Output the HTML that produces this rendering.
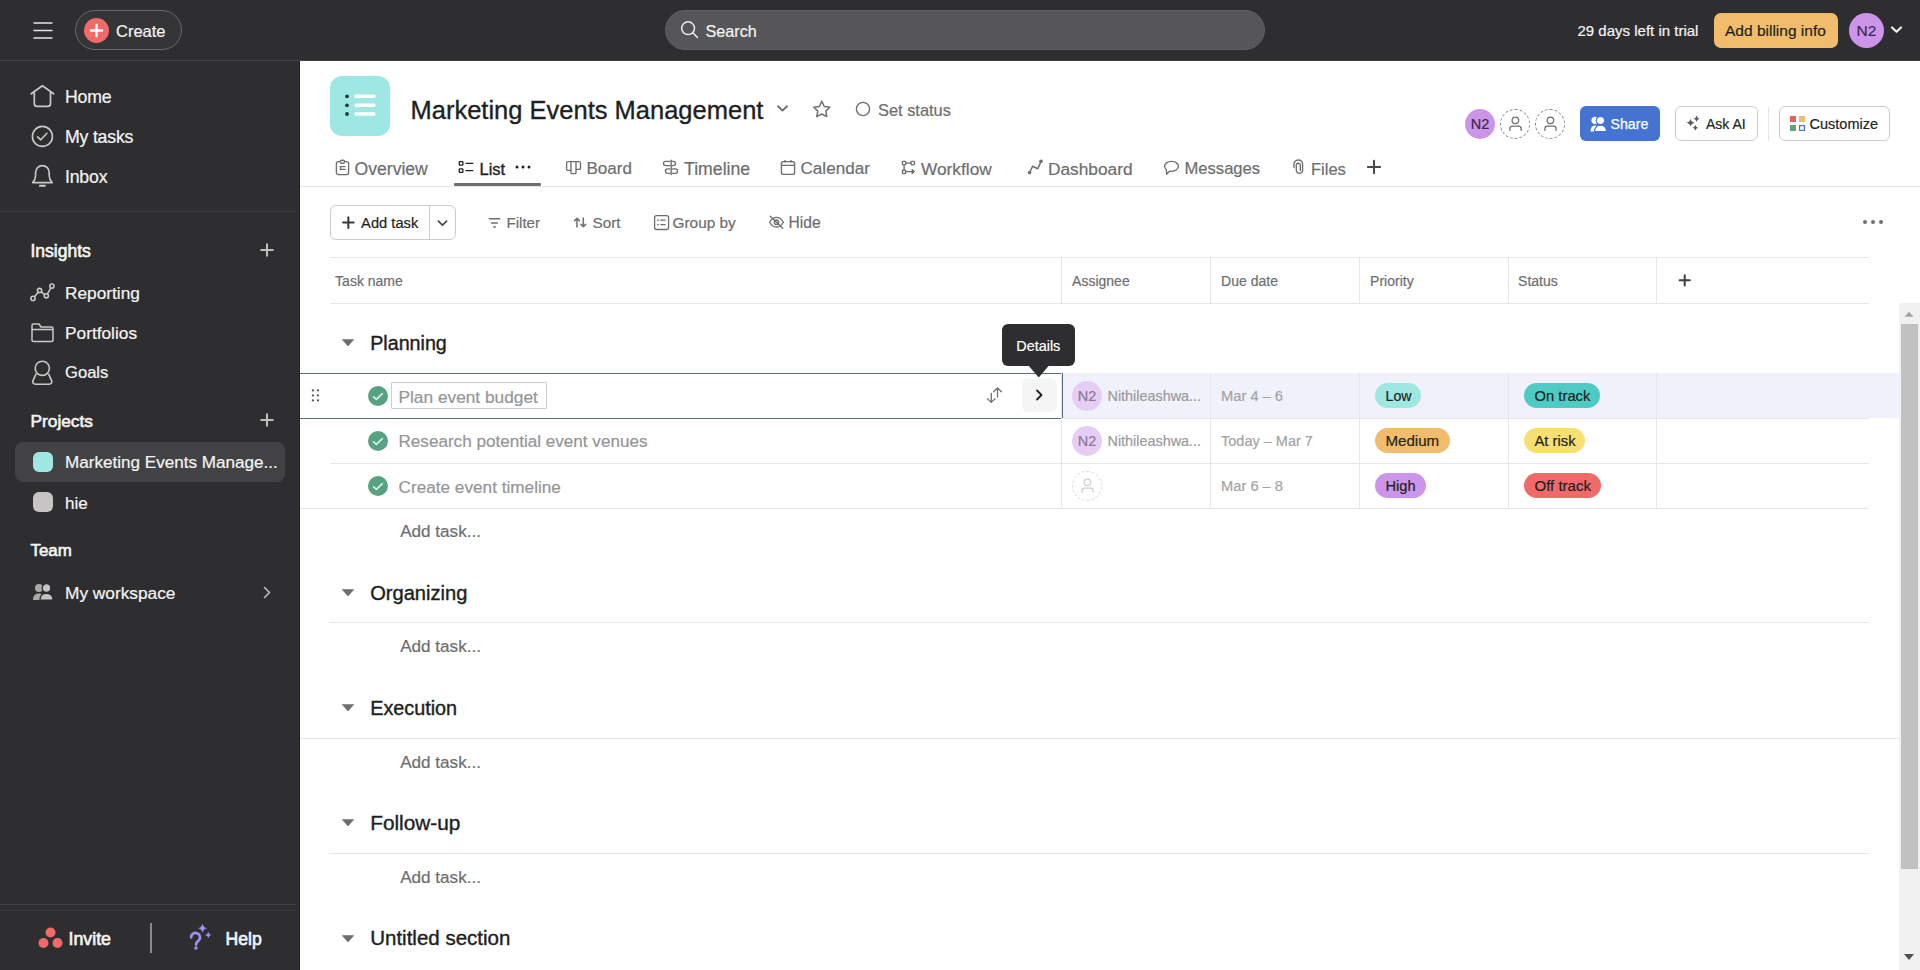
<!DOCTYPE html>
<html><head><meta charset="utf-8"><style>
html,body{margin:0;padding:0;width:1920px;height:970px;overflow:hidden;background:#fff;font-family:"Liberation Sans",sans-serif}
.a{position:absolute}
.t{position:absolute;white-space:nowrap;line-height:20px;-webkit-text-stroke-width:0.2px}
</style></head><body>
<div class="a" style="left:0px;top:0px;width:1920px;height:60px;background:#2e2e30"></div>
<div class="a" style="left:0px;top:60px;width:1920px;height:1px;background:#424244"></div>
<svg class="a" style="left:33px;top:22px;" width="20" height="17" viewBox="0 0 20 17"><path d="M1 0.9H19M1 8.5H19M1 16.1H19" stroke="#e6e6e6" stroke-width="1.5" stroke-linecap="round"/></svg>
<div class="a" style="left:75px;top:10px;width:107px;height:40px;box-sizing:border-box;border:1px solid #6a6a6c;border-radius:20px;background:#353537"></div>
<svg class="a" style="left:84px;top:18px;" width="25" height="25" viewBox="0 0 25 25"><circle cx="12.5" cy="12.5" r="12.5" fill="#f06a6a"/><path d="M12.5 7V18M7 12.5H18" stroke="#fff" stroke-width="2.4" stroke-linecap="round"/></svg>
<div class="t" style="left:116.0px;top:20.9px;font-size:16.5px;color:#f5f4f3;font-weight:400;">Create</div>
<div class="a" style="left:665px;top:10px;width:600px;height:40px;box-sizing:border-box;border-radius:20px;background:#565557;border:1px solid #5f5f61"></div>
<svg class="a" style="left:680px;top:20px;" width="20" height="20" viewBox="0 0 20 20"><circle cx="8.1" cy="8.2" r="6.4" fill="none" stroke="#ececec" stroke-width="1.5"/><path d="M12.7 12.8L17.4 17.4" stroke="#ececec" stroke-width="1.5" stroke-linecap="round"/></svg>
<div class="t" style="left:705.5px;top:20.9px;font-size:16.2px;color:#f5f4f3;font-weight:400;">Search</div>
<div class="t" style="left:1577.5px;top:20.6px;font-size:15px;color:#f5f4f3;font-weight:400;">29 days left in trial</div>
<div class="a" style="left:1714px;top:13px;width:124px;height:35px;border-radius:7px;background:#f1bd6c"></div>
<div class="t" style="left:1725.0px;top:21.1px;font-size:15.5px;color:#1e1f21;font-weight:400;">Add billing info</div>
<div class="a" style="left:1849px;top:13px;width:35px;height:35px;border-radius:50%;background:#cd95ea"></div>
<div class="t" style="left:1849.0px;top:20.9px;font-size:15.5px;color:#3b2850;font-weight:400;width:35px;text-align:center">N2</div>
<svg class="a" style="left:1890px;top:25px;" width="13" height="10" viewBox="0 0 13 10"><path d="M2 2.5L6.5 6.8L11 2.5" fill="none" stroke="#f0f0f0" stroke-width="2.2" stroke-linecap="round" stroke-linejoin="round"/></svg>
<div class="a" style="left:0px;top:61px;width:300px;height:909px;background:#2e2e30"></div>
<div class="a" style="left:0px;top:211px;width:296px;height:1px;background:#3f3f41"></div>
<div class="a" style="left:0px;top:904px;width:296px;height:1px;background:#424244"></div>
<div class="a" style="left:0px;top:910px;width:296px;height:1px;background:#363638"></div>
<div class="a" style="left:299px;top:61px;width:1px;height:909px;background:#1f1f21"></div>
<svg class="a" style="left:30px;top:84px;" width="25" height="25" viewBox="0 0 25 25"><path d="M1.2 9.8L12.4 1.8L23.6 9.8M4.3 7.8V19.4A3 3 0 0 0 7.3 22.4H17.5A3 3 0 0 0 20.5 19.4V7.8" fill="none" stroke="#c9c9c9" stroke-width="1.7" stroke-linecap="round" stroke-linejoin="round"/></svg>
<div class="t" style="left:65.0px;top:87.0px;font-size:17.7px;color:#f5f4f3;font-weight:400;letter-spacing:-0.2px">Home</div>
<svg class="a" style="left:31px;top:125px;" width="23" height="23" viewBox="0 0 23 23"><circle cx="11.4" cy="11.4" r="10" fill="none" stroke="#c9c9c9" stroke-width="1.6"/><path d="M6.6 11.8L9.8 14.8L15.9 8.3" fill="none" stroke="#c9c9c9" stroke-width="1.6" stroke-linecap="round" stroke-linejoin="round"/></svg>
<div class="t" style="left:65.0px;top:126.9px;font-size:17.7px;color:#f5f4f3;font-weight:400;letter-spacing:-0.2px">My tasks</div>
<svg class="a" style="left:31px;top:163px;" width="23" height="25" viewBox="0 0 23 25"><path d="M1.6 19.6C3.6 17.6 4.6 15.6 4.6 12.8V9.4A6.8 6.8 0 0 1 18.2 9.4V12.8C18.2 15.6 19.2 17.6 21.2 19.6Z" fill="none" stroke="#c9c9c9" stroke-width="1.6" stroke-linejoin="round"/><path d="M8.9 22.8H13.9" stroke="#c9c9c9" stroke-width="2" stroke-linecap="round"/></svg>
<div class="t" style="left:65.0px;top:167.0px;font-size:17.7px;color:#f5f4f3;font-weight:400;letter-spacing:-0.2px">Inbox</div>
<div class="t" style="left:30.5px;top:240.5px;font-size:17.5px;color:#f5f4f3;font-weight:400;-webkit-text-stroke:0.6px #f5f4f3">Insights</div>
<svg class="a" style="left:260px;top:243px;" width="14" height="14" viewBox="0 0 14 14"><path d="M7 1.2V12.8M1.2 7H12.8" stroke="#bdbdbd" stroke-width="2.1" stroke-linecap="round"/></svg>
<svg class="a" style="left:30px;top:282px;" width="25" height="20" viewBox="0 0 25 20"><path d="M3 16.4L9.6 8.5L16.3 13.8L21.9 4.1" fill="none" stroke="#c9c9c9" stroke-width="1.6"/><circle cx="3" cy="16.4" r="2.1" fill="#2e2e30" stroke="#c9c9c9" stroke-width="1.6"/><circle cx="9.6" cy="8.5" r="2.1" fill="#2e2e30" stroke="#c9c9c9" stroke-width="1.6"/><circle cx="16.3" cy="13.8" r="2.1" fill="#2e2e30" stroke="#c9c9c9" stroke-width="1.6"/><circle cx="21.9" cy="4.1" r="2.1" fill="#2e2e30" stroke="#c9c9c9" stroke-width="1.6"/></svg>
<div class="t" style="left:65.0px;top:282.5px;font-size:17.3px;color:#f5f4f3;font-weight:400;">Reporting</div>
<svg class="a" style="left:30px;top:322px;" width="25" height="21" viewBox="0 0 25 21"><path d="M2 3.5A1.5 1.5 0 0 1 3.5 2H9L11 5H21.5A1.5 1.5 0 0 1 23 6.5V18A1.5 1.5 0 0 1 21.5 19.5H3.5A1.5 1.5 0 0 1 2 18Z M2 7.5H23" fill="none" stroke="#c9c9c9" stroke-width="1.5" stroke-linejoin="round"/></svg>
<div class="t" style="left:65.0px;top:322.5px;font-size:17.3px;color:#f5f4f3;font-weight:400;">Portfolios</div>
<svg class="a" style="left:31px;top:359px;" width="23" height="27" viewBox="0 0 23 27"><circle cx="11.3" cy="9.3" r="7.1" fill="none" stroke="#c9c9c9" stroke-width="1.6"/><path d="M5.2 14.6L1.9 21.8Q1.2 25.2 4.6 25.2H18Q21.4 25.2 20.7 21.8L17.4 14.6" fill="none" stroke="#c9c9c9" stroke-width="1.6" stroke-linejoin="round"/></svg>
<div class="t" style="left:65.0px;top:362.7px;font-size:16.6px;color:#f5f4f3;font-weight:400;">Goals</div>
<div class="t" style="left:30.5px;top:410.8px;font-size:17.3px;color:#f5f4f3;font-weight:400;-webkit-text-stroke:0.6px #f5f4f3">Projects</div>
<svg class="a" style="left:260px;top:413px;" width="14" height="14" viewBox="0 0 14 14"><path d="M7 1.2V12.8M1.2 7H12.8" stroke="#bdbdbd" stroke-width="2.1" stroke-linecap="round"/></svg>
<div class="a" style="left:15px;top:442px;width:270px;height:40px;border-radius:8px;background:#424244"></div>
<div class="a" style="left:33px;top:452px;width:20px;height:20px;border-radius:6px;background:#9ee7e3"></div>
<div class="t" style="left:65.0px;top:453.1px;font-size:17.1px;color:#f5f4f3;font-weight:400;">Marketing Events Manage...</div>
<div class="a" style="left:33px;top:492px;width:20px;height:20px;border-radius:6px;background:#c7c4c4"></div>
<div class="t" style="left:65.0px;top:493.6px;font-size:17.1px;color:#f5f4f3;font-weight:400;">hie</div>
<div class="t" style="left:30.5px;top:540.6px;font-size:16.9px;color:#f5f4f3;font-weight:400;-webkit-text-stroke:0.6px #f5f4f3">Team</div>
<svg class="a" style="left:32px;top:583px;" width="22" height="18" viewBox="0 0 22 18"><circle cx="7" cy="5" r="4" fill="#a9a9a9"/><circle cx="14.5" cy="5" r="4.3" fill="#c4c4c4" stroke="#2e2e30" stroke-width="1.2"/><path d="M1 17C1 12.5 3.5 10.5 7 10.5S13 12.5 13 17Z" fill="#a9a9a9"/><path d="M8 17C8 12.5 10.5 10.3 14.5 10.3S21 12.5 21 17Z" fill="#c4c4c4" stroke="#2e2e30" stroke-width="1.2"/></svg>
<div class="t" style="left:65.0px;top:583.0px;font-size:17.3px;color:#f5f4f3;font-weight:400;">My workspace</div>
<svg class="a" style="left:263px;top:586px;" width="8" height="13" viewBox="0 0 8 13"><path d="M1.5 1.5L6.5 6.5L1.5 11.5" fill="none" stroke="#bdbdbd" stroke-width="1.6" stroke-linecap="round" stroke-linejoin="round"/></svg>
<svg class="a" style="left:38px;top:927px;" width="25" height="22" viewBox="0 0 25 22"><circle cx="12.5" cy="5.5" r="5" fill="#f06a6a"/><circle cx="5.5" cy="16" r="5" fill="#f06a6a"/><circle cx="19.5" cy="16" r="5" fill="#f06a6a"/></svg>
<div class="t" style="left:68.5px;top:928.5px;font-size:17.8px;color:#f5f4f3;font-weight:400;-webkit-text-stroke:0.65px #f5f4f3">Invite</div>
<div class="a" style="left:150px;top:923px;width:2px;height:30px;background:#8a8a8a"></div>
<svg class="a" style="left:188px;top:922px;" width="25" height="30" viewBox="0 0 25 30"><path d="M3.2 15.4A4.4 4.4 0 1 1 10.9 18.2C9.3 19.4 8.1 20.2 8.1 22.6" fill="none" stroke="#9d90ee" stroke-width="2.7" stroke-linecap="round"/><circle cx="7.9" cy="26" r="1.8" fill="#9d90ee"/><path d="M14.5 1.6Q15.2 5.6 19.2 6.3Q15.2 7 14.5 11Q13.8 7 9.8 6.3Q13.8 5.6 14.5 1.6Z" fill="#9d90ee"/><path d="M20.3 9.8Q20.8 12.5 23.5 13Q20.8 13.5 20.3 16.2Q19.8 13.5 17.1 13Q19.8 12.5 20.3 9.8Z" fill="#9d90ee"/></svg>
<div class="t" style="left:225.5px;top:928.9px;font-size:17.6px;color:#f5f4f3;font-weight:400;-webkit-text-stroke:0.65px #f5f4f3">Help</div>
<div class="a" style="left:330px;top:76px;width:60px;height:60px;border-radius:12px;background:#9ee7e3"></div>
<svg class="a" style="left:343px;top:92px;" width="34" height="28" viewBox="0 0 34 28"><circle cx="4" cy="4.3" r="1.9" fill="#1e3a3a"/><circle cx="4" cy="13.3" r="1.9" fill="#1e3a3a"/><circle cx="4" cy="22" r="1.9" fill="#1e3a3a"/><path d="M13 4.3H31M13 13.3H31M13 22H31" stroke="#fff" stroke-width="3.4" stroke-linecap="round"/></svg>
<div class="t" style="left:410.5px;top:99.8px;font-size:25.5px;color:#1e1f21;font-weight:400;-webkit-text-stroke:0.35px #1e1f21">Marketing Events Management</div>
<svg class="a" style="left:776px;top:104px;" width="13" height="9" viewBox="0 0 13 9"><path d="M2 2.3L6.5 6.6L11 2.3" fill="none" stroke="#6d6e6f" stroke-width="1.9" stroke-linecap="round" stroke-linejoin="round"/></svg>
<svg class="a" style="left:811px;top:99px;" width="21" height="20" viewBox="0 0 21 20"><path d="M10.8 2.3L13.3 7.5L18.8 8.2L14.8 12.1L15.8 17.6L10.8 15L5.8 17.6L6.8 12.1L2.8 8.2L8.3 7.5Z" fill="none" stroke="#6d6e6f" stroke-width="1.5" stroke-linejoin="round"/></svg>
<svg class="a" style="left:855px;top:101px;" width="16" height="16" viewBox="0 0 16 16"><circle cx="8" cy="8" r="6.6" fill="none" stroke="#6d6e6f" stroke-width="1.4"/></svg>
<div class="t" style="left:878.0px;top:100.1px;font-size:16.4px;color:#6d6e6f;font-weight:400;">Set status</div>
<div class="a" style="left:1465px;top:109px;width:30px;height:30px;border-radius:50%;background:#cd95ea"></div>
<div class="t" style="left:1465.0px;top:114.0px;font-size:14.5px;color:#3b2850;font-weight:400;width:30px;text-align:center">N2</div>
<div class="a" style="left:1500px;top:109px;width:30px;height:30px;box-sizing:border-box;border-radius:50%;border:1px dashed #86888b"></div>
<svg class="a" style="left:1500px;top:109px;" width="30" height="30" viewBox="0 0 30 30"><circle cx="15.4" cy="11.3" r="3.3" fill="none" stroke="#6d6e6f" stroke-width="1.25"/><path d="M9.9 21.4V19.8A2.6 2.6 0 0 1 12.5 17.2H18.5A2.6 2.6 0 0 1 21.1 19.8V21.4" fill="none" stroke="#6d6e6f" stroke-width="1.25" stroke-linecap="round"/></svg>
<div class="a" style="left:1535px;top:109px;width:30px;height:30px;box-sizing:border-box;border-radius:50%;border:1px dashed #86888b"></div>
<svg class="a" style="left:1535px;top:109px;" width="30" height="30" viewBox="0 0 30 30"><circle cx="15.4" cy="11.3" r="3.3" fill="none" stroke="#6d6e6f" stroke-width="1.25"/><path d="M9.9 21.4V19.8A2.6 2.6 0 0 1 12.5 17.2H18.5A2.6 2.6 0 0 1 21.1 19.8V21.4" fill="none" stroke="#6d6e6f" stroke-width="1.25" stroke-linecap="round"/></svg>
<div class="a" style="left:1580px;top:106px;width:80px;height:35px;border-radius:6px;background:#4573d2"></div>
<svg class="a" style="left:1590px;top:116px;" width="17" height="16" viewBox="0 0 17 16"><circle cx="5" cy="4.3" r="3.6" fill="#fff"/><circle cx="10.5" cy="4.5" r="4.2" fill="#fff" stroke="#4573d2" stroke-width="1.2"/><path d="M0.5 15.5C0.5 11.5 2.5 9.5 5 9.5S9.5 11.5 9.5 15.5Z" fill="#fff"/><path d="M4.5 15.5C4.5 11.5 7 9.2 10.5 9.2S16.5 11.5 16.5 15.5Z" fill="#fff" stroke="#4573d2" stroke-width="1.2"/></svg>
<div class="t" style="left:1610.5px;top:114.0px;font-size:14.2px;color:#fff;font-weight:400;-webkit-text-stroke:0.25px #fff">Share</div>
<div class="a" style="left:1675px;top:106px;width:83px;height:35px;box-sizing:border-box;border-radius:6px;border:1px solid #cfcbcb;background:#fff"></div>
<svg class="a" style="left:1685px;top:114px;" width="16" height="18" viewBox="0 0 16 18"><path d="M5.6 4.3999999999999995Q6.116 8.184 9.899999999999999 8.7Q6.116 9.216 5.6 13.0Q5.084 9.216 1.2999999999999998 8.7Q5.084 8.184 5.6 4.3999999999999995Z M11.6 1.5499999999999998Q11.984 4.366 14.8 4.75Q11.984 5.134 11.6 7.95Q11.216 5.134 8.399999999999999 4.75Q11.216 4.366 11.6 1.5499999999999998Z M10.35 10.45Q10.746 13.354 13.649999999999999 13.75Q10.746 14.146 10.35 17.05Q9.953999999999999 14.146 7.05 13.75Q9.953999999999999 13.354 10.35 10.45Z" fill="#58595b"/></svg>
<div class="t" style="left:1706.0px;top:114.0px;font-size:14px;color:#1e1f21;font-weight:400;">Ask AI</div>
<div class="a" style="left:1768px;top:107px;width:1px;height:34px;background:#e6e6e6"></div>
<div class="a" style="left:1779px;top:106px;width:111px;height:35px;box-sizing:border-box;border-radius:6px;border:1px solid #cfcbcb;background:#fff"></div>
<svg class="a" style="left:1790px;top:116px;" width="15" height="15" viewBox="0 0 15 15"><rect x="0" y="0" width="6" height="6" fill="#e8615a"/><rect x="9" y="0" width="6" height="6" fill="#f1bd6c"/><rect x="0" y="9" width="6" height="6" fill="#5da283"/><rect x="9.6" y="9.6" width="4.8" height="4.8" fill="none" stroke="#4573d2" stroke-width="1.2"/></svg>
<div class="t" style="left:1809.5px;top:113.9px;font-size:14.5px;color:#1e1f21;font-weight:400;">Customize</div>
<svg class="a" style="left:330px;top:155px;" width="30" height="25" viewBox="0 0 30 25"><path d="M10.3 6.6H8.4A2 2 0 0 0 6.4 8.6V17.6A2 2 0 0 0 8.4 19.6H16.6A2 2 0 0 0 18.6 17.6V8.6A2 2 0 0 0 16.6 6.6H14.6" fill="none" stroke="#6d6e6f" stroke-width="1.35" stroke-linecap="round" stroke-linejoin="round"/><rect x="10.3" y="5.2" width="4.3" height="3" rx="1.4" fill="none" stroke="#6d6e6f" stroke-width="1.35" stroke-linecap="round" stroke-linejoin="round"/><path d="M9.5 11.6H15.5M9.5 14.4H15.5M10.6 11.2V15" stroke="#6d6e6f" stroke-width="1.1"/></svg>
<div class="t" style="left:354.5px;top:158.9px;font-size:17.6px;color:#6d6e6f;font-weight:400;">Overview</div>
<svg class="a" style="left:457px;top:159px;" width="18" height="16" viewBox="0 0 18 16"><rect x="2.3" y="2.6" width="3.6" height="3.6" rx="0.6" fill="none" stroke="#1e1f21" stroke-width="1.3"/><rect x="2.3" y="9.8" width="3.6" height="3.6" rx="0.6" fill="none" stroke="#1e1f21" stroke-width="1.3"/><path d="M8.5 4.4H16.3M8.5 11.6H16.3" stroke="#1e1f21" stroke-width="1.3"/></svg>
<div class="t" style="left:479.5px;top:159.3px;font-size:16.5px;color:#1e1f21;font-weight:400;-webkit-text-stroke:0.35px #1e1f21">List</div>
<svg class="a" style="left:515px;top:165px;" width="16" height="4" viewBox="0 0 16 4"><circle cx="2" cy="2" r="1.5" fill="#1e1f21"/><circle cx="8" cy="2" r="1.5" fill="#1e1f21"/><circle cx="14" cy="2" r="1.5" fill="#1e1f21"/></svg>
<div class="a" style="left:454px;top:183px;width:87px;height:3px;background:#6d6e6f;border-radius:1px"></div>
<svg class="a" style="left:560px;top:155px;" width="30" height="25" viewBox="0 0 30 25"><path d="M7.8 6.6H19.3A1.2 1.2 0 0 1 20.5 7.8V13.2A1.2 1.2 0 0 1 19.3 14.4H16V17.4A1.2 1.2 0 0 1 14.8 18.6H12.2A1.2 1.2 0 0 1 11 17.4V15.4H7.8A1.2 1.2 0 0 1 6.6 14.2V7.8A1.2 1.2 0 0 1 7.8 6.6Z M11 6.6V15.4M16 6.6V14.4" fill="none" stroke="#6d6e6f" stroke-width="1.35" stroke-linecap="round" stroke-linejoin="round"/></svg>
<div class="t" style="left:586.5px;top:159.1px;font-size:17px;color:#6d6e6f;font-weight:400;">Board</div>
<svg class="a" style="left:655px;top:155px;" width="30" height="25" viewBox="0 0 30 25"><path d="M16.2 5.2V19.4" fill="none" stroke="#6d6e6f" stroke-width="1.35" stroke-linecap="round" stroke-linejoin="round"/><path d="M15 6.4H10.6A2.1 2.1 0 0 0 10.6 10.6H15M17.4 6.4H18.4A2.1 2.1 0 0 1 18.4 10.6H17.4M15 13.9H12.6A2.2 2.2 0 0 0 12.6 18.3H15M17.4 13.9H20.4A2.2 2.2 0 0 1 20.4 18.3H17.4" fill="none" stroke="#6d6e6f" stroke-width="1.35" stroke-linecap="round" stroke-linejoin="round"/></svg>
<div class="t" style="left:684.0px;top:158.9px;font-size:17.7px;color:#6d6e6f;font-weight:400;">Timeline</div>
<svg class="a" style="left:780px;top:159px;" width="16" height="17" viewBox="0 0 16 17"><rect x="1.4" y="2.6" width="13.2" height="12.8" rx="2.2" fill="none" stroke="#6d6e6f" stroke-width="1.35"/><path d="M1.4 6.4H14.6M5 1V3.6M11 1V3.6" stroke="#6d6e6f" stroke-width="1.35"/></svg>
<div class="t" style="left:800.5px;top:159.1px;font-size:17.1px;color:#6d6e6f;font-weight:400;">Calendar</div>
<svg class="a" style="left:895px;top:155px;" width="30" height="25" viewBox="0 0 30 25"><rect x="7.4" y="6.3" width="3.3" height="3.6" rx="0.8" fill="none" stroke="#6d6e6f" stroke-width="1.35" stroke-linecap="round" stroke-linejoin="round"/><rect x="16.1" y="6.3" width="3.4" height="3.6" rx="0.8" fill="none" stroke="#6d6e6f" stroke-width="1.35" stroke-linecap="round" stroke-linejoin="round"/><rect x="7.4" y="15.1" width="3.3" height="3.4" rx="0.8" fill="none" stroke="#6d6e6f" stroke-width="1.35" stroke-linecap="round" stroke-linejoin="round"/><path d="M10.7 8.1H16.1M9.1 9.9V15.1M10.7 16.6H18" fill="none" stroke="#6d6e6f" stroke-width="1.35" stroke-linecap="round" stroke-linejoin="round"/><path d="M17 14.2L19.8 16.6L17 19Z" fill="#6d6e6f" stroke="#6d6e6f" stroke-width="0.8" stroke-linejoin="round"/></svg>
<div class="t" style="left:921.0px;top:159.0px;font-size:17.3px;color:#6d6e6f;font-weight:400;">Workflow</div>
<svg class="a" style="left:1020px;top:155px;" width="30" height="25" viewBox="0 0 30 25"><path d="M9.6 17.6L12.6 11.3L17.8 13.8L21 6.4" fill="none" stroke="#6d6e6f" stroke-width="1.5" stroke-linecap="round" stroke-linejoin="round"/><circle cx="9.6" cy="17.6" r="1.8" fill="#6d6e6f"/><circle cx="21" cy="6.2" r="1.8" fill="#6d6e6f"/></svg>
<div class="t" style="left:1048.0px;top:159.0px;font-size:17.3px;color:#6d6e6f;font-weight:400;">Dashboard</div>
<svg class="a" style="left:1158px;top:155px;" width="30" height="25" viewBox="0 0 30 25"><path d="M13.5 6.4C9.4 6.4 6.6 8.6 6.6 11.3C6.6 12.6 7.3 13.8 8.4 14.7L8.6 19.2L11.6 16.1C12.2 16.2 12.8 16.3 13.5 16.3C17.6 16.3 20.4 14 20.4 11.3S17.6 6.4 13.5 6.4Z" fill="none" stroke="#6d6e6f" stroke-width="1.35" stroke-linecap="round" stroke-linejoin="round"/></svg>
<div class="t" style="left:1184.5px;top:159.2px;font-size:16.6px;color:#6d6e6f;font-weight:400;">Messages</div>
<svg class="a" style="left:1286px;top:155px;" width="30" height="25" viewBox="0 0 30 25"><path d="M7.9 12.4V9.2A4.1 3.9 0 0 1 16.6 9V15.6A3.3 3.9 0 0 1 10.3 15.6V10.2A2 2 0 0 1 14.3 10.2V15.4" fill="none" stroke="#6d6e6f" stroke-width="1.35" stroke-linecap="round" stroke-linejoin="round"/></svg>
<div class="t" style="left:1311.0px;top:159.3px;font-size:16.5px;color:#6d6e6f;font-weight:400;">Files</div>
<svg class="a" style="left:1366px;top:159px;" width="16" height="16" viewBox="0 0 16 16"><path d="M8 1.8V14.2M1.8 8H14.2" stroke="#4a4b4d" stroke-width="2" stroke-linecap="round"/></svg>
<div class="a" style="left:300px;top:186px;width:1620px;height:1px;background:#e8e8e8"></div>
<div class="a" style="left:330px;top:205px;width:126px;height:35px;box-sizing:border-box;border-radius:6px;border:1px solid #cfcbcb"></div>
<div class="a" style="left:429px;top:206px;width:1px;height:33px;background:#cfcbcb"></div>
<svg class="a" style="left:330px;top:205px;" width="130" height="35" viewBox="0 0 130 35"><path d="M18.35 12.3V22.9M13.05 17.6H23.65" stroke="#3a3b3d" stroke-width="2" stroke-linecap="round"/><path d="M108.4 16.2L112.5 20.2L116.6 16.2" fill="none" stroke="#4a4b4d" stroke-width="1.8" stroke-linecap="round" stroke-linejoin="round"/></svg>
<div class="t" style="left:361.1px;top:212.9px;font-size:14.7px;color:#1e1f21;font-weight:400;">Add task</div>
<svg class="a" style="left:480px;top:205px;" width="30" height="35" viewBox="0 0 30 35"><path d="M9.2 13.8H19.8M11.6 18H17.4M13.7 22H15.3" stroke="#6d6e6f" stroke-width="1.4" stroke-linecap="round"/></svg>
<div class="t" style="left:506.5px;top:212.8px;font-size:15.1px;color:#6d6e6f;font-weight:400;">Filter</div>
<svg class="a" style="left:570px;top:205px;" width="20" height="35" viewBox="0 0 20 35"><path d="M7 22V13.2M4.6 15.6L7 13.2L9.4 15.6M13.3 13V21.8M10.9 19.4L13.3 21.8L15.7 19.4" fill="none" stroke="#6d6e6f" stroke-width="1.5" stroke-linecap="round" stroke-linejoin="round"/></svg>
<div class="t" style="left:592.5px;top:212.7px;font-size:15.3px;color:#6d6e6f;font-weight:400;">Sort</div>
<svg class="a" style="left:650px;top:205px;" width="25" height="35" viewBox="0 0 25 35"><rect x="4.6" y="10.7" width="14" height="13.8" rx="2" fill="none" stroke="#6d6e6f" stroke-width="1.3"/><circle cx="8" cy="15.2" r="0.9" fill="#6d6e6f"/><circle cx="8" cy="19.6" r="0.9" fill="#6d6e6f"/><path d="M10.3 15.2H15.6M10.3 19.6H15.6" stroke="#6d6e6f" stroke-width="1.3"/></svg>
<div class="t" style="left:672.5px;top:212.7px;font-size:15.4px;color:#6d6e6f;font-weight:400;">Group by</div>
<svg class="a" style="left:765px;top:205px;" width="25" height="35" viewBox="0 0 25 35"><path d="M4.6 17.2C6.4 14 8.9 12.4 11.5 12.4S16.6 14 18.4 17.2C16.6 20.4 14.1 22 11.5 22S6.4 20.4 4.6 17.2Z" fill="none" stroke="#6d6e6f" stroke-width="1.3"/><circle cx="11.5" cy="17.2" r="2.2" fill="none" stroke="#6d6e6f" stroke-width="1.3"/><path d="M5.2 11.2L17.8 23.2" stroke="#6d6e6f" stroke-width="1.3" stroke-linecap="round"/></svg>
<div class="t" style="left:788.5px;top:212.6px;font-size:15.6px;color:#6d6e6f;font-weight:400;">Hide</div>
<svg class="a" style="left:1862px;top:219px;" width="22" height="6" viewBox="0 0 22 6"><circle cx="3" cy="3" r="2" fill="#6d6e6f"/><circle cx="11" cy="3" r="2" fill="#6d6e6f"/><circle cx="19" cy="3" r="2" fill="#6d6e6f"/></svg>
<div class="a" style="left:330px;top:257px;width:1539px;height:1px;background:#e6e6e6"></div>
<div class="a" style="left:330px;top:303px;width:1539px;height:1px;background:#e6e6e6"></div>
<div class="a" style="left:1061px;top:257px;width:1px;height:47px;background:#e6e6e6"></div>
<div class="a" style="left:1210px;top:257px;width:1px;height:47px;background:#e6e6e6"></div>
<div class="a" style="left:1359px;top:257px;width:1px;height:47px;background:#e6e6e6"></div>
<div class="a" style="left:1508px;top:257px;width:1px;height:47px;background:#e6e6e6"></div>
<div class="a" style="left:1656px;top:257px;width:1px;height:47px;background:#e6e6e6"></div>
<div class="t" style="left:335.1px;top:271.0px;font-size:14px;color:#6d6e6f;font-weight:400;">Task name</div>
<div class="t" style="left:1072.1px;top:271.0px;font-size:14px;color:#6d6e6f;font-weight:400;">Assignee</div>
<div class="t" style="left:1221.1px;top:271.0px;font-size:14px;color:#6d6e6f;font-weight:400;">Due date</div>
<div class="t" style="left:1370.1px;top:271.0px;font-size:14px;color:#6d6e6f;font-weight:400;">Priority</div>
<div class="t" style="left:1518.1px;top:271.0px;font-size:14px;color:#6d6e6f;font-weight:400;">Status</div>
<svg class="a" style="left:1677px;top:273px;" width="15" height="15" viewBox="0 0 15 15"><path d="M7.7 2.2V12.4M2.6 7.3H12.8" stroke="#3d3e40" stroke-width="2" stroke-linecap="round"/></svg>
<svg class="a" style="left:341px;top:339px;" width="14" height="8" viewBox="0 0 14 8"><path d="M1.2 0.6H12.8L7 7Z" fill="#6d6e6f" stroke="#6d6e6f" stroke-width="0.6" stroke-linejoin="round"/></svg>
<div class="t" style="left:370.2px;top:333.2px;font-size:19.7px;color:#1e1f21;font-weight:400;-webkit-text-stroke:0.4px #1e1f21">Planning</div>
<div class="a" style="left:1062px;top:373px;width:838px;height:45px;background:#f0f1fa"></div>
<div class="a" style="left:300px;top:373px;width:763px;height:46px;box-sizing:border-box;border:1px solid #526a7a;border-left:none"></div>
<div class="a" style="left:1061px;top:373px;width:1px;height:135px;background:#e6e6e6"></div>
<div class="a" style="left:1210px;top:373px;width:1px;height:135px;background:#e6e6e6"></div>
<div class="a" style="left:1359px;top:373px;width:1px;height:135px;background:#e6e6e6"></div>
<div class="a" style="left:1508px;top:373px;width:1px;height:135px;background:#e6e6e6"></div>
<div class="a" style="left:1656px;top:373px;width:1px;height:135px;background:#e6e6e6"></div>
<div class="a" style="left:330px;top:463px;width:1539px;height:1px;background:#e6e6e6"></div>
<div class="a" style="left:300px;top:508px;width:1569px;height:1px;background:#e6e6e6"></div>
<div class="a" style="left:1062px;top:418px;width:807px;height:1px;background:#e6e6e6"></div>
<svg class="a" style="left:300px;top:380px;" width="30" height="30" viewBox="0 0 30 30"><circle cx="12.9" cy="10.4" r="1.15" fill="#58595b"/><circle cx="12.9" cy="15.4" r="1.15" fill="#58595b"/><circle cx="12.9" cy="20.4" r="1.15" fill="#58595b"/><circle cx="18" cy="10.4" r="1.15" fill="#58595b"/><circle cx="18" cy="15.4" r="1.15" fill="#58595b"/><circle cx="18" cy="20.4" r="1.15" fill="#58595b"/></svg>
<svg class="a" style="left:368px;top:386px;" width="20" height="20" viewBox="0 0 20 20"><circle cx="10" cy="10" r="10" fill="#58a182"/><path d="M5.6 10.9L8.4 13.4L14.3 7.7" fill="none" stroke="#d6f7e6" stroke-width="1.6" stroke-linecap="round" stroke-linejoin="round"/></svg>
<div class="a" style="left:391px;top:382px;width:156px;height:27px;box-sizing:border-box;border:1px solid #cdcdcd;border-radius:1px"></div>
<div class="t" style="left:398.5px;top:386.5px;font-size:17.3px;color:#959597;font-weight:400;">Plan event budget</div>
<svg class="a" style="left:980px;top:380px;" width="30" height="30" viewBox="0 0 30 30"><path d="M11.3 13.3V22.3M7.4 18.6L11.3 22.4L15.2 18.6M17.5 17V8M13.6 11.8L17.5 7.9L21.4 11.8" fill="none" stroke="#6d6e6f" stroke-width="1.3" stroke-linecap="round" stroke-linejoin="round"/></svg>
<div class="a" style="left:1022px;top:378px;width:35px;height:34px;border-radius:6px;background:#f5f5f5"></div>
<svg class="a" style="left:1035px;top:389px;" width="9" height="12" viewBox="0 0 9 12"><path d="M2 1.5L6.5 6L2 10.5" fill="none" stroke="#1e1f21" stroke-width="1.8" stroke-linecap="round" stroke-linejoin="round"/></svg>
<div class="a" style="left:1002px;top:324px;width:73px;height:42px;border-radius:6px;background:#2e2e30"></div>
<svg class="a" style="left:1028px;top:365px;" width="22" height="13" viewBox="0 0 22 13"><path d="M0.5 0.5H21L11.6 11.6Q10.75 12.6 9.9 11.6Z" fill="#2e2e30"/></svg>
<div class="t" style="left:1016.3px;top:335.8px;font-size:14.4px;color:#fff;font-weight:400;-webkit-text-stroke:0.2px #fff">Details</div>
<svg class="a" style="left:368px;top:431px;" width="20" height="20" viewBox="0 0 20 20"><circle cx="10" cy="10" r="10" fill="#58a182"/><path d="M5.6 10.9L8.4 13.4L14.3 7.7" fill="none" stroke="#d6f7e6" stroke-width="1.6" stroke-linecap="round" stroke-linejoin="round"/></svg>
<div class="t" style="left:398.5px;top:431.9px;font-size:17.1px;color:#959597;font-weight:400;">Research potential event venues</div>
<svg class="a" style="left:368px;top:476px;" width="20" height="20" viewBox="0 0 20 20"><circle cx="10" cy="10" r="10" fill="#58a182"/><path d="M5.6 10.9L8.4 13.4L14.3 7.7" fill="none" stroke="#d6f7e6" stroke-width="1.6" stroke-linecap="round" stroke-linejoin="round"/></svg>
<div class="t" style="left:398.5px;top:476.8px;font-size:17.2px;color:#959597;font-weight:400;">Create event timeline</div>
<div class="a" style="left:1072px;top:381px;width:30px;height:30px;border-radius:50%;background:#e6cdf3"></div>
<div class="t" style="left:1072.0px;top:386.0px;font-size:14.5px;color:#8a7895;font-weight:400;width:30px;text-align:center">N2</div>
<div class="t" style="left:1107.5px;top:386.0px;font-size:14.4px;color:#9a9a9c;font-weight:400;">Nithileashwa...</div>
<div class="a" style="left:1072px;top:426px;width:30px;height:30px;border-radius:50%;background:#e6cdf3"></div>
<div class="t" style="left:1072.0px;top:431.0px;font-size:14.5px;color:#8a7895;font-weight:400;width:30px;text-align:center">N2</div>
<div class="t" style="left:1107.5px;top:431.0px;font-size:14.4px;color:#9a9a9c;font-weight:400;">Nithileashwa...</div>
<div class="a" style="left:1072px;top:471px;width:30px;height:30px;box-sizing:border-box;border-radius:50%;border:1px dashed #dadada"></div>
<svg class="a" style="left:1072px;top:471px;" width="30" height="30" viewBox="0 0 30 30"><circle cx="15.4" cy="11.3" r="3.3" fill="none" stroke="#d0d0d0" stroke-width="1.25"/><path d="M9.9 21.4V19.8A2.6 2.6 0 0 1 12.5 17.2H18.5A2.6 2.6 0 0 1 21.1 19.8V21.4" fill="none" stroke="#d0d0d0" stroke-width="1.25" stroke-linecap="round"/></svg>
<div class="t" style="left:1221.0px;top:386.2px;font-size:14.7px;color:#a3a3a6;font-weight:400;">Mar 4 – 6</div>
<div class="t" style="left:1221.0px;top:431.3px;font-size:14.5px;color:#a3a3a6;font-weight:400;">Today – Mar 7</div>
<div class="t" style="left:1221.0px;top:476.2px;font-size:14.7px;color:#a3a3a6;font-weight:400;">Mar 6 – 8</div>
<div class="a" style="left:1375px;top:383.0px;width:46px;height:25px;border-radius:13px;background:#9ee7e3"></div>
<div class="t" style="left:1385.5px;top:385.9px;font-size:14.2px;color:#1e1f21;font-weight:400;">Low</div>
<div class="a" style="left:1524px;top:383.0px;width:76px;height:25px;border-radius:13px;background:#4ecbc4"></div>
<div class="t" style="left:1534.5px;top:385.7px;font-size:14.8px;color:#1e1f21;font-weight:400;">On track</div>
<div class="a" style="left:1375px;top:428.0px;width:75px;height:25px;border-radius:13px;background:#f1bd6c"></div>
<div class="t" style="left:1385.5px;top:430.6px;font-size:15.1px;color:#1e1f21;font-weight:400;">Medium</div>
<div class="a" style="left:1524px;top:428.0px;width:61px;height:25px;border-radius:13px;background:#f8df72"></div>
<div class="t" style="left:1534.5px;top:430.7px;font-size:14.8px;color:#1e1f21;font-weight:400;">At risk</div>
<div class="a" style="left:1375px;top:473.0px;width:51px;height:25px;border-radius:13px;background:#cd95ea"></div>
<div class="t" style="left:1385.5px;top:475.7px;font-size:14.6px;color:#1e1f21;font-weight:400;">High</div>
<div class="a" style="left:1524px;top:473.0px;width:77px;height:25px;border-radius:13px;background:#f06a6a"></div>
<div class="t" style="left:1534.5px;top:475.6px;font-size:15px;color:#1e1f21;font-weight:400;">Off track</div>
<div class="t" style="left:400.2px;top:521.8px;font-size:17.1px;color:#6d6e6f;font-weight:400;">Add task...</div>
<svg class="a" style="left:341px;top:588.6px;" width="14" height="8" viewBox="0 0 14 8"><path d="M1.2 0.6H12.8L7 7Z" fill="#6d6e6f" stroke="#6d6e6f" stroke-width="0.6" stroke-linejoin="round"/></svg>
<div class="t" style="left:370.2px;top:582.6px;font-size:20.1px;color:#1e1f21;font-weight:400;-webkit-text-stroke:0.4px #1e1f21">Organizing</div>
<div class="a" style="left:329px;top:622px;width:1540px;height:1px;background:#e6e6e6"></div>
<div class="t" style="left:400.2px;top:636.7px;font-size:17.1px;color:#6d6e6f;font-weight:400;">Add task...</div>
<svg class="a" style="left:341px;top:703.6px;" width="14" height="8" viewBox="0 0 14 8"><path d="M1.2 0.6H12.8L7 7Z" fill="#6d6e6f" stroke="#6d6e6f" stroke-width="0.6" stroke-linejoin="round"/></svg>
<div class="t" style="left:370.2px;top:697.7px;font-size:19.8px;color:#1e1f21;font-weight:400;-webkit-text-stroke:0.4px #1e1f21">Execution</div>
<div class="a" style="left:300px;top:738px;width:1599px;height:1px;background:#e6e6e6"></div>
<div class="t" style="left:400.2px;top:752.7px;font-size:17.1px;color:#6d6e6f;font-weight:400;">Add task...</div>
<svg class="a" style="left:341px;top:819.4px;" width="14" height="8" viewBox="0 0 14 8"><path d="M1.2 0.6H12.8L7 7Z" fill="#6d6e6f" stroke="#6d6e6f" stroke-width="0.6" stroke-linejoin="round"/></svg>
<div class="t" style="left:370.2px;top:813.2px;font-size:20.8px;color:#1e1f21;font-weight:400;-webkit-text-stroke:0.4px #1e1f21">Follow-up</div>
<div class="a" style="left:329px;top:853px;width:1540px;height:1px;background:#e6e6e6"></div>
<div class="t" style="left:400.2px;top:867.7px;font-size:17.1px;color:#6d6e6f;font-weight:400;">Add task...</div>
<svg class="a" style="left:341px;top:934.5px;" width="14" height="8" viewBox="0 0 14 8"><path d="M1.2 0.6H12.8L7 7Z" fill="#6d6e6f" stroke="#6d6e6f" stroke-width="0.6" stroke-linejoin="round"/></svg>
<div class="t" style="left:370.2px;top:928.4px;font-size:20.5px;color:#1e1f21;font-weight:400;-webkit-text-stroke:0.4px #1e1f21">Untitled section</div>
<div class="a" style="left:1899px;top:303px;width:21px;height:667px;background:#f1f1f1"></div>
<div class="a" style="left:1901px;top:324px;width:17px;height:545px;background:#c1c1c1"></div>
<svg class="a" style="left:1904px;top:311px;" width="10" height="6" viewBox="0 0 10 6"><path d="M0.5 5.8H9.5L5 0.8Z" fill="#a3a3a3"/></svg>
<svg class="a" style="left:1904px;top:954px;" width="10" height="6" viewBox="0 0 10 6"><path d="M0 0H10L5 6Z" fill="#505050"/></svg>

</body></html>
